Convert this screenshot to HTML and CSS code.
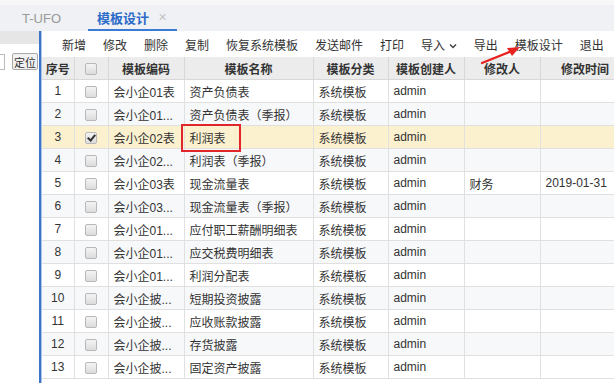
FILE: index.html
```
<!DOCTYPE html>
<html lang="zh-CN">
<head>
    <meta charset="UTF-8">
    <title>模板设计</title>
    <link rel="stylesheet" href="styles.css">
</head>
<body>
    <div class="top-strip"></div>
    <div class="tabbar">
        <div class="tab">T-UFO</div>
        <div class="tab active">模板设计<span class="close">✕</span></div>
    </div>
    <div class="main">
        <div class="side">
            <div class="side-head"></div>
            <div class="side-search">
                <span class="side-input"></span>
                <button class="locate">定位</button>
            </div>
        </div>
        <div class="divider"></div>
        <div class="content">
            <div class="toolbar">
                <span>新增</span>
                <span>修改</span>
                <span>删除</span>
                <span>复制</span>
                <span>恢复系统模板</span>
                <span>发送邮件</span>
                <span>打印</span>
                <span>导入 <svg class="caret" width="8" height="6" viewBox="0 0 8 6"><path d="M1 1.5 L4 4.5 L7 1.5" fill="none" stroke="#444" stroke-width="1.5"/></svg></span>
                <span>导出</span>
                <span>模板设计</span>
                <span>退出</span>
            </div>
            <table class="grid">
                <colgroup>
                    <col style="width:32px">
                    <col style="width:34px">
                    <col style="width:76px">
                    <col style="width:129px">
                    <col style="width:75px">
                    <col style="width:76px">
                    <col style="width:76px">
                    <col style="width:90px">
                </colgroup>
                <thead>
                    <tr>
                        <th>序号</th>
                        <th><span class="cb"></span></th>
                        <th>模板编码</th>
                        <th>模板名称</th>
                        <th>模板分类</th>
                        <th>模板创建人</th>
                        <th>修改人</th>
                        <th>修改时间</th>
                    </tr>
                </thead>
                <tbody>
                    <tr><td class="num">1</td><td class="c"><span class="cb"></span></td><td>会小企01表</td><td>资产负债表</td><td>系统模板</td><td>admin</td><td></td><td></td></tr>
                    <tr><td class="num">2</td><td class="c"><span class="cb"></span></td><td>会小企01...</td><td>资产负债表（季报）</td><td>系统模板</td><td>admin</td><td></td><td></td></tr>
                    <tr class="selected"><td class="num">3</td><td class="c"><span class="cb checked"></span></td><td>会小企02表</td><td>利润表</td><td>系统模板</td><td>admin</td><td></td><td></td></tr>
                    <tr><td class="num">4</td><td class="c"><span class="cb"></span></td><td>会小企02...</td><td>利润表（季报）</td><td>系统模板</td><td>admin</td><td></td><td></td></tr>
                    <tr><td class="num">5</td><td class="c"><span class="cb"></span></td><td>会小企03表</td><td>现金流量表</td><td>系统模板</td><td>admin</td><td>财务</td><td>2019-01-31</td></tr>
                    <tr><td class="num">6</td><td class="c"><span class="cb"></span></td><td>会小企03...</td><td>现金流量表（季报）</td><td>系统模板</td><td>admin</td><td></td><td></td></tr>
                    <tr><td class="num">7</td><td class="c"><span class="cb"></span></td><td>会小企01...</td><td>应付职工薪酬明细表</td><td>系统模板</td><td>admin</td><td></td><td></td></tr>
                    <tr><td class="num">8</td><td class="c"><span class="cb"></span></td><td>会小企01...</td><td>应交税费明细表</td><td>系统模板</td><td>admin</td><td></td><td></td></tr>
                    <tr><td class="num">9</td><td class="c"><span class="cb"></span></td><td>会小企01...</td><td>利润分配表</td><td>系统模板</td><td>admin</td><td></td><td></td></tr>
                    <tr><td class="num">10</td><td class="c"><span class="cb"></span></td><td>会小企披...</td><td>短期投资披露</td><td>系统模板</td><td>admin</td><td></td><td></td></tr>
                    <tr><td class="num">11</td><td class="c"><span class="cb"></span></td><td>会小企披...</td><td>应收账款披露</td><td>系统模板</td><td>admin</td><td></td><td></td></tr>
                    <tr><td class="num">12</td><td class="c"><span class="cb"></span></td><td>会小企披...</td><td>存货披露</td><td>系统模板</td><td>admin</td><td></td><td></td></tr>
                    <tr><td class="num">13</td><td class="c"><span class="cb"></span></td><td>会小企披...</td><td>固定资产披露</td><td>系统模板</td><td>admin</td><td></td><td></td></tr>
                </tbody>
            </table>
        </div>
    </div>

    <div class="mark-box"></div>
    <svg class="mark-arrow" width="60" height="30" viewBox="0 0 60 30">
        <path d="M4 24 L34 12" stroke="#e8231f" stroke-width="2.2" stroke-linecap="round"/>
        <path d="M42 8 L29 9 L34 17 Z" fill="#e8231f"/>
    </svg>
</body>
</html>
```

FILE: styles.css
```
html, body {
    margin: 0;
    padding: 0;
}
body {
    width: 614px;
    height: 383px;
    overflow: hidden;
    position: relative;
    font-family: "Liberation Sans", "Noto Sans CJK SC", sans-serif;
    font-size: 12px;
    color: #333;
    background: #fff;
}
.top-strip {
    height: 5px;
    background: #f7f7f7;
}
.tabbar {
    height: 26px;
    background: #eff1f4;
    display: flex;
    align-items: stretch;
    font-size: 13px;
}
.tab {
    display: flex;
    align-items: center;
    color: #999;
    width: 66px;
    padding-left: 22px;
}
.tab.active {
    width: auto;
    color: #2c6cc8;
    padding: 0 10px 0 9px;
    border-bottom: 2px solid #3a7bd5;
    height: 24px;
    font-weight: bold;
}
.close {
    color: #c4c4c4;
    font-weight: normal;
    font-size: 11px;
    margin-left: 9px;
}
.main {
    display: flex;
    height: 352px;
}
.side {
    width: 39px;
    flex: none;
}
.side-head {
    height: 13px;
    background: #e6e6e6;
}
.side-search {
    display: flex;
    align-items: center;
    margin-top: 9px;
}
.side-input {
    width: 4px;
    height: 14px;
    border: 1px solid #bbb;
    border-left: none;
    background: #fff;
}
.locate {
    margin-left: 7px;
    padding: 0 1px;
    height: 17px;
    font-family: "Noto Sans CJK SC", sans-serif;
    font-size: 11px;
    line-height: 14px;
    color: #333;
    background: #f2f2f2;
    border: 1px solid #a9a9a9;
    border-radius: 2px;
}
.divider {
    width: 2px;
    flex: none;
    background: #3d74c8;
    border-right: 1px solid #a9c3ea;
}
.content {
    flex: 1;
    overflow: hidden;
}
.toolbar {
    height: 26px;
    display: flex;
    align-items: center;
    gap: 17px;
    padding-left: 20px;
    font-family: "Noto Sans CJK SC", sans-serif;
    white-space: nowrap;
}
.caret {
    vertical-align: middle;
    margin-left: 1px;
}
.grid {
    border-collapse: collapse;
    table-layout: fixed;
    width: 588px;
}
.grid th, .grid td {
    height: 22px;
    padding: 0 5px;
    border: 1px solid #e0e0e0;
    white-space: nowrap;
    overflow: hidden;
    text-align: left;
}
.grid th {
    background: #ececec;
    border-color: #d8d8d8;
    border-top: none;
    text-align: center;
    font-weight: bold;
}
.grid th:first-child, .grid td:first-child {
    border-left: none;
    padding: 0;
}
.grid td.num, .grid td.c {
    text-align: center;
}
.grid tbody tr:nth-child(even) td {
    background: #f7f8fa;
}
.grid tbody tr.selected td {
    background: #fcf1cf;
}
.cb {
    display: inline-block;
    width: 10px;
    height: 10px;
    border: 1px solid #b8b8b8;
    border-radius: 2px;
    background: linear-gradient(#f4f4f4, #dcdcdc);
    vertical-align: middle;
    position: relative;
}
.cb.checked::after {
    content: "";
    position: absolute;
    left: 3px;
    top: 0px;
    width: 3px;
    height: 6px;
    border: solid #333;
    border-width: 0 2px 2px 0;
    transform: rotate(40deg);
}
.mark-box {
    position: absolute;
    left: 181px;
    top: 124px;
    width: 56px;
    height: 24px;
    border: 2px solid #e0262a;
}
.mark-arrow {
    position: absolute;
    left: 478px;
    top: 39px;
}
```
